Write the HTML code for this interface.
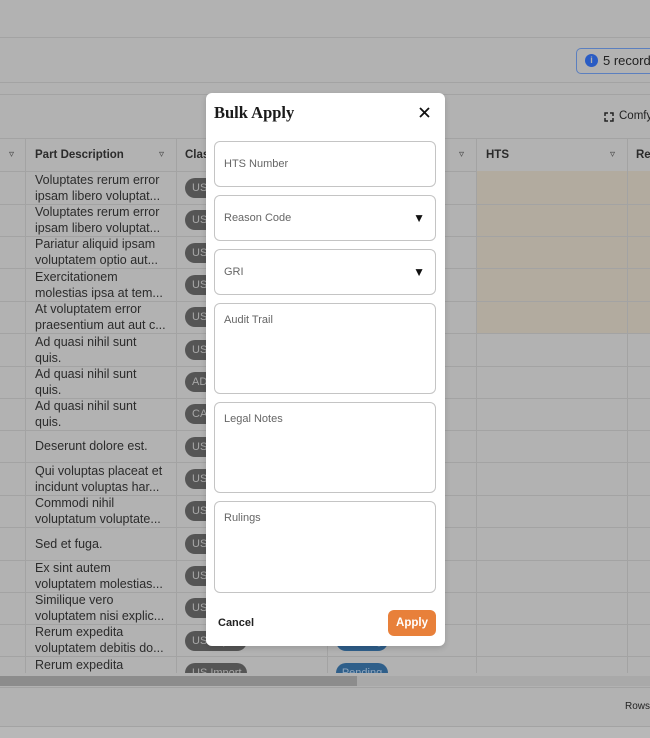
<!DOCTYPE html>
<html><head><style>
*{margin:0;padding:0;box-sizing:border-box}
body{width:650px;height:738px;overflow:hidden;background:#b2b2b2;font-family:"Liberation Sans",sans-serif;position:relative;color:#2e2e2e}
.a{position:absolute}
.hl{position:absolute;left:0;width:650px;height:1px;background:#a3a3a3}
.vl{position:absolute;width:1px;background:#a3a3a3;top:138px;height:535px}
.d{position:absolute;left:35px;font-size:12.5px;line-height:16px;width:140px;color:#2b2b2b;white-space:nowrap}
.p{position:absolute;left:185px;width:62px;height:20px;border-radius:10px;background:#555;color:#a8a8a8;font-size:11px;line-height:20px;padding-left:7px}
.s{position:absolute;left:336px;width:52px;height:20px;border-radius:10px;background:#2f5f8a;color:#8fa6bd;font-size:11px;line-height:20px;text-align:center}
.hd{position:absolute;top:149px;font-size:11.5px;font-weight:bold;color:#2b2b2b}
.f{position:absolute;top:149px;font-size:10px;color:#444}
.tan{position:absolute;left:477px;width:150px;top:171px;height:162px;background:#b2ab9f}
.tan2{position:absolute;left:628px;width:22px;top:171px;height:162px;background:#b2ab9f}
.modal{position:absolute;left:206px;top:93px;width:239px;height:553px;background:#fff;border-radius:6px;box-shadow:0 2px 6px rgba(0,0,0,.15)}
.in{position:absolute;left:8px;width:222px;border:1px solid #c4c4c4;border-radius:6px;font-size:11px;color:#666;padding-left:9px}
</style></head><body>
<div class="hl" style="top:37px"></div>
<div class="hl" style="top:82px"></div>
<div class="hl" style="top:94px"></div>
<div class="a" style="left:576px;top:48px;width:90px;height:26px;border:1px solid #5b7fbf;border-radius:5px"></div>
<div class="a" style="left:585px;top:54px;width:13px;height:13px;border-radius:50%;background:#2a5cc4;color:#b2b2b2;font-size:9px;font-weight:bold;text-align:center;line-height:13px">i</div>
<div class="a" style="left:603px;top:53px;font-size:13px;color:#222;white-space:nowrap">5 records</div>
<svg class="a" style="left:604px;top:112px" width="10" height="10" viewBox="0 0 10 10"><path d="M1 4V1H4M6 1H9V4M9 6V9H6M4 9H1V6" fill="none" stroke="#222" stroke-width="1.5"/></svg>
<div class="a" style="left:619px;top:110px;font-size:11.5px;color:#222;white-space:nowrap">Comfy</div>

<div class="hl" style="top:138px"></div>
<div class="hl" style="top:171px"></div>
<div class="tan"></div><div class="tan2"></div>
<div class="vl" style="left:25px"></div><div class="vl" style="left:176px"></div><div class="vl" style="left:327px"></div><div class="vl" style="left:476px"></div><div class="vl" style="left:627px"></div>
<div class="f" style="left:9px">&#9663;</div>
<div class="hd" style="left:35px">Part Description</div><div class="f" style="left:159px">&#9663;</div>
<div class="hd" style="left:185px">Clas</div><div class="f" style="left:459px">&#9663;</div>
<div class="hd" style="left:486px">HTS</div><div class="f" style="left:610px">&#9663;</div>
<div class="hd" style="left:636px">Re</div>

<div class="hl" style="top:204px"></div><div class="hl" style="top:236px"></div><div class="hl" style="top:268px"></div><div class="hl" style="top:301px"></div><div class="hl" style="top:333px"></div><div class="hl" style="top:366px"></div><div class="hl" style="top:398px"></div><div class="hl" style="top:430px"></div><div class="hl" style="top:462px"></div><div class="hl" style="top:495px"></div><div class="hl" style="top:527px"></div><div class="hl" style="top:560px"></div><div class="hl" style="top:592px"></div><div class="hl" style="top:624px"></div><div class="hl" style="top:656px"></div>

<div class="d" style="top:172px">Voluptates rerum error<br>ipsam libero voluptat...</div>
<div class="d" style="top:204px">Voluptates rerum error<br>ipsam libero voluptat...</div>
<div class="d" style="top:236px">Pariatur aliquid ipsam<br>voluptatem optio aut...</div>
<div class="d" style="top:269px">Exercitationem<br>molestias ipsa at tem...</div>
<div class="d" style="top:301px">At voluptatem error<br>praesentium aut aut c...</div>
<div class="d" style="top:334px">Ad quasi nihil sunt<br>quis.</div>
<div class="d" style="top:366px">Ad quasi nihil sunt<br>quis.</div>
<div class="d" style="top:398px">Ad quasi nihil sunt<br>quis.</div>
<div class="d" style="top:438px">Deserunt dolore est.</div>
<div class="d" style="top:463px">Qui voluptas placeat et<br>incidunt voluptas har...</div>
<div class="d" style="top:495px">Commodi nihil<br>voluptatum voluptate...</div>
<div class="d" style="top:536px">Sed et fuga.</div>
<div class="d" style="top:560px">Ex sint autem<br>voluptatem molestias...</div>
<div class="d" style="top:592px">Similique vero<br>voluptatem nisi explic...</div>
<div class="d" style="top:624px">Rerum expedita<br>voluptatem debitis do...</div>
<div class="d" style="top:657px">Rerum expedita</div>

<div class="p" style="top:178px">US Import</div><div class="p" style="top:210px">US Import</div><div class="p" style="top:243px">US Import</div><div class="p" style="top:275px">US Import</div><div class="p" style="top:307px">US Import</div><div class="p" style="top:340px">US Import</div><div class="p" style="top:372px">AD</div><div class="p" style="top:404px">CA</div><div class="p" style="top:437px">US Import</div><div class="p" style="top:469px">US Import</div><div class="p" style="top:501px">US Import</div><div class="p" style="top:534px">US Import</div><div class="p" style="top:566px">US Import</div><div class="p" style="top:598px">US Import</div><div class="p" style="top:631px">US Import</div><div class="p" style="top:663px">US Import</div>
<div class="s" style="top:631px">Pending</div><div class="s" style="top:663px">Pending</div>

<div class="a" style="left:0;top:673px;width:650px;height:65px;background:#b2b2b2"></div>
<div class="a" style="left:0;top:676px;width:650px;height:10px;background:#a9a9a9"></div>
<div class="a" style="left:0;top:676px;width:357px;height:10px;background:#8c8c8c"></div>
<div class="hl" style="top:687px"></div>
<div class="a" style="left:625px;top:701px;font-size:10px;color:#222">Rows</div>
<div class="hl" style="top:726px"></div>
<div class="a" style="left:0;top:727px;width:650px;height:11px;background:#b8b8b8"></div>

<div class="modal">
<div class="a" style="left:8px;top:10px;font-family:'Liberation Serif',serif;font-weight:bold;font-size:16.5px;color:#1a1a1a">Bulk Apply</div>
<svg class="a" style="left:213px;top:14px" width="11" height="11" viewBox="0 0 11 11"><path d="M1 1L10 10M10 1L1 10" stroke="#111" stroke-width="1.8"/></svg>
<div class="in" style="top:48px;height:46px;line-height:44px">HTS Number</div>
<div class="in" style="top:102px;height:46px;line-height:44px">Reason Code<span class="a" style="right:10px;top:0;font-size:12px;color:#111">&#9660;</span></div>
<div class="in" style="top:156px;height:46px;line-height:44px">GRI<span class="a" style="right:10px;top:0;font-size:12px;color:#111">&#9660;</span></div>
<div class="in" style="top:210px;height:91px;padding-top:10px">Audit Trail</div>
<div class="in" style="top:309px;height:91px;padding-top:10px">Legal Notes</div>
<div class="in" style="top:408px;height:92px;padding-top:10px">Rulings</div>
<div class="a" style="left:12px;top:524px;font-size:11px;font-weight:bold;color:#222">Cancel</div>
<div class="a" style="left:182px;top:517px;width:48px;height:26px;border-radius:6px;background:#e8803a;color:#fff;font-size:11.5px;font-weight:bold;text-align:center;line-height:26px">Apply</div>
</div>
</body></html>
